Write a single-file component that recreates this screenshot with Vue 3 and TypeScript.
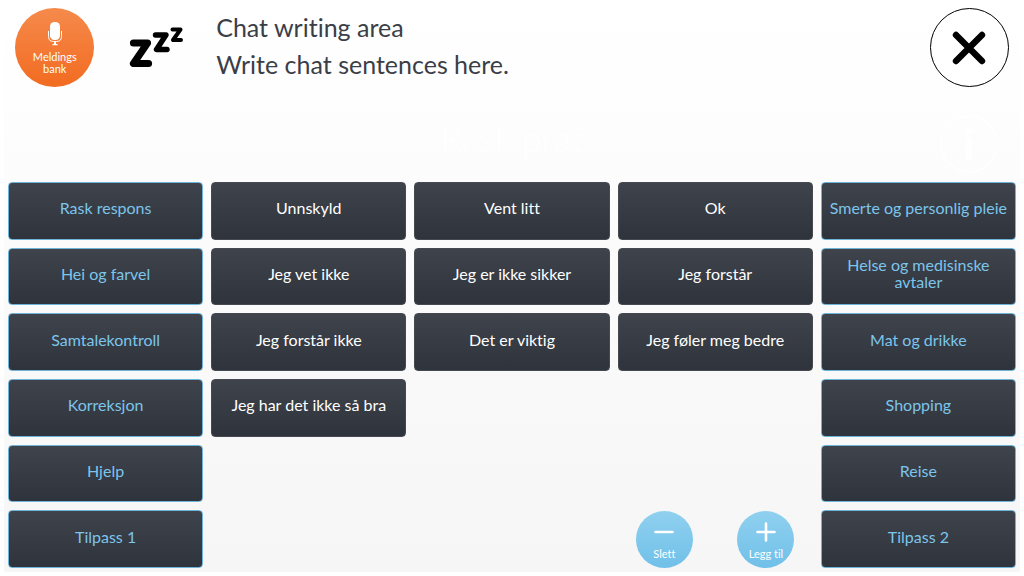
<script setup lang="ts">
interface Cell {
  text: string
  kind: 'category' | 'phrase' | 'empty' | 'tools'
}

const c = (text: string): Cell => ({ text, kind: 'category' })
const p = (text: string): Cell => ({ text, kind: 'phrase' })
const e: Cell = { text: '', kind: 'empty' }

const rows: Cell[][] = [
  [c('Rask respons'), p('Unnskyld'), p('Vent litt'), p('Ok'), c('Smerte og personlig pleie')],
  [c('Hei og farvel'), p('Jeg vet ikke'), p('Jeg er ikke sikker'), p('Jeg forstår'), c('Helse og medisinske avtaler')],
  [c('Samtalekontroll'), p('Jeg forstår ikke'), p('Det er viktig'), p('Jeg føler meg bedre'), c('Mat og drikke')],
  [c('Korreksjon'), p('Jeg har det ikke så bra'), e, e, c('Shopping')],
  [c('Hjelp'), e, e, e, c('Reise')],
  [c('Tilpass 1'), e, e, { text: '', kind: 'tools' }, c('Tilpass 2')],
]
const cells: Cell[] = rows.flat()
</script>

<template>
  <main class="page">
    <header class="top">
      <button class="round bank" type="button">
        <svg class="mic" viewBox="0 0 16 24" aria-hidden="true">
          <rect x="3" y="0" width="10" height="18" rx="4.5" fill="#fff" />
          <path d="M1.500 9v5.500q0 5 5 5h3q5 0 5-5V9" fill="none" stroke="#fff" stroke-width="1" />
          <path d="M7 19h2v3h1.500v1.200h-5V22H7z" fill="#fff" />
        </svg>
        <span>Meldings<br />bank</span>
      </button>
      <button class="rest" type="button" aria-label="Pause">
        <svg class="zzz" viewBox="0 0 54 42" aria-hidden="true">
          <g fill="none" stroke="#000" stroke-linecap="round" stroke-linejoin="round">
            <path d="M4.500 16H18.500L4.500 36.500H19.500" stroke-width="7.200" />
            <path d="M26.500 8H37L27.500 22.500H38" stroke-width="5.400" />
            <path d="M43.500 2.500H51.500L44 13H52" stroke-width="4" />
          </g>
        </svg>
      </button>
      <div class="message">
        <p>Chat writing area</p>
        <p>Write chat sentences here.</p>
      </div>
      <button class="round close" type="button" aria-label="Lukk">
        <svg viewBox="0 0 34 34" aria-hidden="true">
          <path d="M4 4L30 30M30 4L4 30" fill="none" stroke="#000" stroke-width="6.400" stroke-linecap="round" />
        </svg>
      </button>
    </header>

    <section class="heading">
      <h1>Rask prat</h1>
      <button class="info" type="button" aria-label="Info">
        <svg viewBox="0 0 58 58" aria-hidden="true">
          <circle cx="29" cy="29" r="28" fill="none" stroke="#fff" stroke-width="1.500" />
          <circle cx="29" cy="16" r="3.500" fill="#fff" />
          <path d="M29 25v18" stroke="#fff" stroke-width="6" stroke-linecap="round" />
        </svg>
      </button>
    </section>

    <section class="board">
      <template v-for="(cell, i) in cells" :key="i">
        <div v-if="cell.kind === 'tools'" class="tools">
          <button class="tool" type="button">
            <svg viewBox="0 0 20 20" aria-hidden="true">
              <path d="M1.500 10h17" stroke="#fff" stroke-width="2.600" stroke-linecap="round" />
            </svg>
            <span>Slett</span>
          </button>
          <button class="tool" type="button">
            <svg viewBox="0 0 20 20" aria-hidden="true">
              <path d="M1.500 10h17M10 1.500v17" stroke="#fff" stroke-width="2.600" stroke-linecap="round" />
            </svg>
            <span>Legg til</span>
          </button>
        </div>
        <div v-else-if="cell.kind === 'empty'"></div>
        <button v-else class="key" :class="cell.kind" type="button">{{ cell.text }}</button>
      </template>
    </section>
  </main>
</template>

<style>
body {
  margin: 0;
  background: #fff;
}
</style>

<style scoped>
.page {
  box-sizing: border-box;
  min-height: 100vh;
  display: flex;
  flex-direction: column;
  border: 4px solid #fff;
  padding: 4px;
  background: linear-gradient(#fff, #f6f6f6) padding-box;
  font-family: Lato, 'Noto Sans', sans-serif;
  font-variant-ligatures: none;
}

button {
  margin: 0;
  padding: 0;
  border: 0;
  background: none;
  color: inherit;
  font: inherit;
  font-variant-ligatures: none;
  cursor: pointer;
}

svg {
  display: block;
}

.top {
  display: grid;
  grid-template-columns: repeat(10, 1fr);
  column-gap: 8px;
  align-items: center;
  justify-items: center;
  height: 78px;
}

.round {
  display: flex;
  flex-direction: column;
  align-items: center;
  box-sizing: border-box;
  width: 79px;
  height: 79px;
  border-radius: 50%;
}

.bank {
  gap: 5px;
  padding-top: 14px;
  background: linear-gradient(#f58a4b, #f26b21);
  color: #fff;
  font-size: 11px;
  line-height: 12px;
}

.mic {
  width: 16px;
  height: 24px;
}

.zzz {
  width: 54px;
  height: 42px;
}

.message {
  grid-column: 3 / 10;
  justify-self: start;
  padding: 0 0 4px 5px;
  color: #3b3e47;
  font-size: 25px;
  line-height: 37px;
}

.message p {
  margin: 0;
}

.close {
  justify-content: center;
  border: 1px solid #000;
  background: #fff;
}

.close svg {
  width: 34px;
  height: 34px;
}

.heading {
  display: grid;
  grid-template-columns: repeat(10, 1fr);
  column-gap: 8px;
  align-items: center;
  justify-items: center;
  height: 96px;
  color: #fff;
}

.heading h1 {
  grid-column: 2 / 10;
  margin: 0;
  padding-top: 8px;
  font-size: 36px;
  font-weight: 300;
  line-height: 40px;
}

.info {
  padding-top: 20px;
}

.info svg {
  width: 58px;
  height: 58px;
}

.board {
  flex: 1;
  display: grid;
  grid-template-columns: repeat(5, minmax(0, 1fr));
  grid-template-rows: repeat(6, minmax(0, 1fr));
  gap: 8px;
}

.key {
  box-sizing: border-box;
  border: 1px solid #454950;
  border-radius: 4px;
  padding: 0 4px 6px;
  background: linear-gradient(#3f434b, #2f333b);
  color: #fff;
  font-size: 16px;
  line-height: 17px;
}

.category {
  border-color: #6eb4d8;
  color: #7cc5eb;
}

.tools {
  display: grid;
  grid-template-columns: repeat(2, 1fr);
  column-gap: 8px;
  align-items: center;
  justify-items: center;
}

.tool {
  display: flex;
  flex-direction: column;
  align-items: center;
  gap: 6px;
  box-sizing: border-box;
  width: 57px;
  height: 57px;
  padding-top: 11px;
  border-radius: 50%;
  background: linear-gradient(#90d0ef, #70c0e9);
  color: #fff;
  font-size: 11px;
  line-height: 12px;
}

.tool svg {
  width: 20px;
  height: 20px;
}
</style>
